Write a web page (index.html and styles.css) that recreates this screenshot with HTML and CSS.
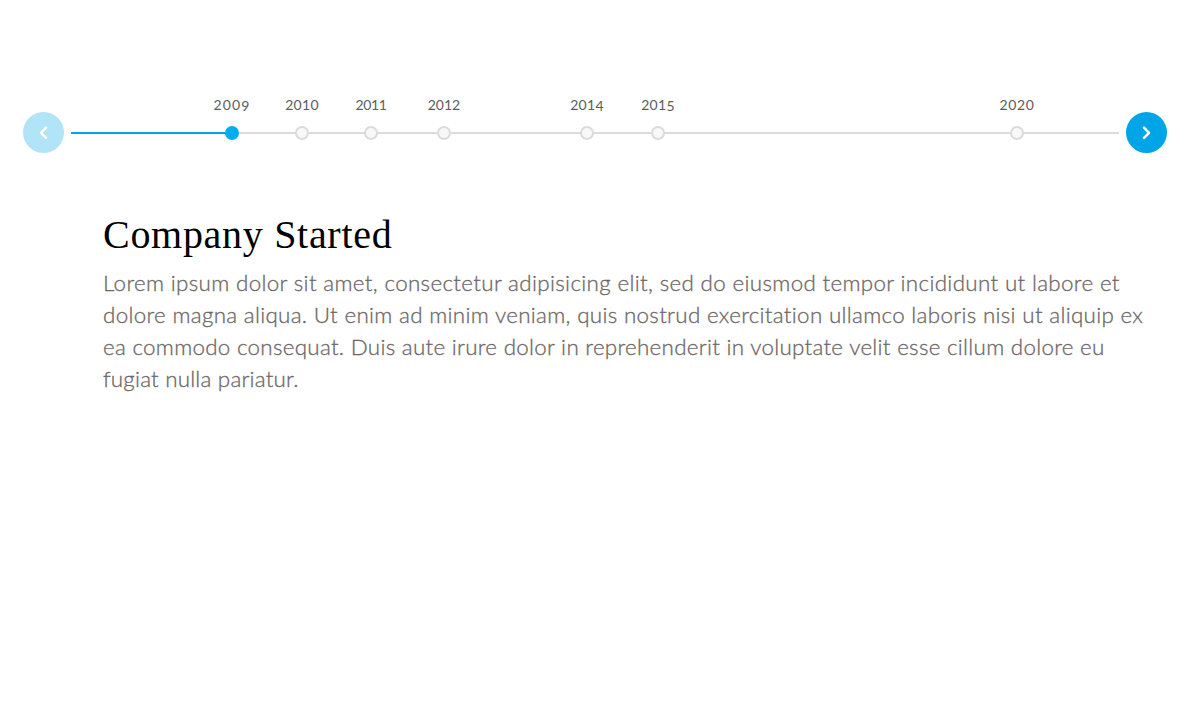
FILE: index.html
```html
<!DOCTYPE html>
<html lang="en">
<head>
<meta charset="utf-8">
<title>Company timeline</title>
<link rel="stylesheet" href="styles.css">
</head>
<body>
<main class="page">
  <nav class="timeline">
    <button class="arrow arrow-disabled" aria-label="Previous"><svg viewBox="0 0 41 41"><path d="M23 15.7 18 20.8l5 5.1"/></svg></button>
    <ol class="events">
      <li class="event selected"><span class="year">200<span class="low">9</span></span><i class="dot"></i></li>
      <li class="event y2010"><span class="year">2010</span><i class="dot"></i></li>
      <li class="event y2011"><span class="year">2011</span><i class="dot"></i></li>
      <li class="event y2012"><span class="year">2012</span><i class="dot"></i></li>
      <li class="event y2014"><span class="year">201<span class="low">4</span></span><i class="dot"></i></li>
      <li class="event y2015"><span class="year">201<span class="low">5</span></span><i class="dot"></i></li>
      <li class="event y2020"><span class="year">2020</span><i class="dot"></i></li>
    </ol>
    <button class="arrow" aria-label="Next"><svg viewBox="0 0 41 41"><path d="m18 15.7 5 5.1-5 5.1"/></svg></button>
  </nav>
  <article class="story">
    <h1 class="title">Company Started</h1>
    <p class="copy"><span class="line l1">Lorem ipsum dolor sit amet, consectetur adipisicing elit, sed do eiusmod tempor incididunt ut labore et</span>
    <span class="line l2">dolore magna aliqua. Ut enim ad minim veniam, quis nostrud exercitation ullamco laboris nisi ut aliquip ex</span>
    <span class="line l3">ea commodo consequat. Duis aute irure dolor in reprehenderit in voluptate velit esse cillum dolore eu</span>
    <span class="line l4">fugiat nulla pariatur.</span></p>
  </article>
</main>
</body>
</html>
```
FILE: styles.css
```css
* { box-sizing: border-box; }
body { margin: 0; background: #fff; }
.page { width: 1200px; height: 725px; padding-top: 92px; overflow: hidden; }
.timeline { display: flex; height: 62px; padding-left: 23.3px; align-items: flex-end; }
.arrow { flex: none; width: 41px; height: 41px; margin: 0 0 .7px; padding: 0; border: 0; border-radius: 50%; background: #00a5e7; }
.arrow-disabled { background: #b2e4f7; }
.arrow svg { display: block; width: 41px; height: 41px; fill: none; stroke: #fff; stroke-width: 2.5; stroke-linecap: round; stroke-linejoin: round; }
.events {
  display: flex; align-self: flex-start; flex: none; width: 1048px; height: 62px; margin: 0 7px 0 6.7px; padding: 0 0 0 131px; list-style: none;
  background: linear-gradient(#00a5ee, #00a5ee) 0 39.7px / 160px 2.2px no-repeat, linear-gradient(#dbdbdb, #dbdbdb) 0 39.7px / 100% 2.2px no-repeat;
}
.event { flex: none; width: 60px; display: flex; flex-direction: column; align-items: center; }
.year { height: 26px; line-height: 26px; margin-bottom: 7.5px; font-family: Lato, sans-serif; font-size: 14px; color: #5c5c5c; letter-spacing: .3px; font-variant-ligatures: none; }
.low { vertical-align: -1px; line-height: 1; }
.dot { width: 14px; height: 14px; border: 2px solid #dbdbdb; border-radius: 50%; background: #f8f8f8; }
.selected .dot { background: #00acf0; border-color: #00acf0; }
.selected .year { letter-spacing: 1.1px; }
.y2010 { margin-left: 10px; }
.y2011 { margin-left: 9px; }
.y2011 .year { letter-spacing: -.4px; }
.y2012 { margin-left: 13px; }
.y2012 .year { letter-spacing: 0; }
.y2014 { margin-left: 83px; }
.y2015 { margin-left: 11px; }
.y2020 { margin-left: 299px; }
.y2020 .year { letter-spacing: .6px; }
.story { padding: 56px 0 0 103px; }
.title { margin: 0; height: 57px; font: 400 40px/50px "Liberation Serif", serif; color: #000; letter-spacing: .7px; }
.copy { margin: 0; font: 300 22.4px/32px Lato, sans-serif; color: #6d6666; -webkit-text-stroke: .3px #6d6666; font-variant-ligatures: none; }
.line { display: block; white-space: nowrap; width: max-content; }
.l1 { letter-spacing: .33px; }
.l2 { letter-spacing: .305px; }
.l3 { letter-spacing: .28px; }
.l4 { letter-spacing: .2px; }
```
